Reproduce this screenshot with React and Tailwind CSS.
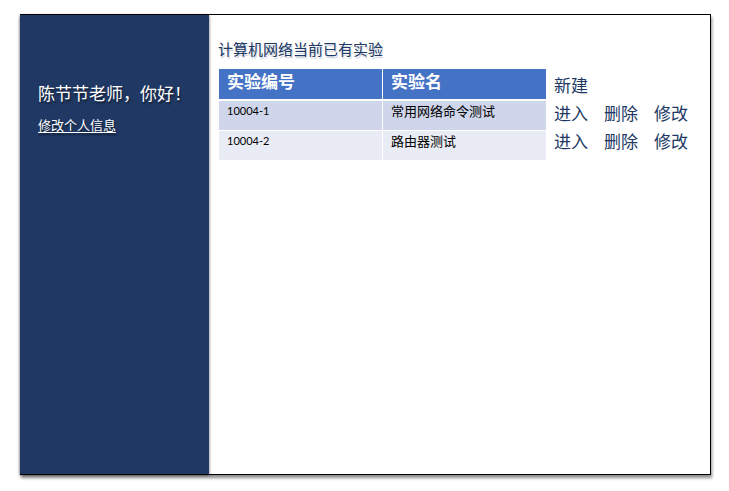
const experiments = [
  { id: '10004-1', name: '常用网络命令测试' },
  { id: '10004-2', name: '路由器测试' },
];

const actions = ['进入', '删除', '修改'];

function Sidebar() {
  return (
    <aside className="z-10 w-[189px] shrink-0 bg-[#203864] pl-[18px] text-white shadow-[0_1px_3px_rgba(0,0,0,0.6)]">
      <p className="mt-[66px] whitespace-nowrap text-[17px] leading-6 [text-shadow:1px_2px_2px_rgba(0,0,0,0.5)]">
        陈节节老师，你好！
      </p>
      <a href="#profile" className="mt-[10px] block text-[13px] leading-5 underline underline-offset-2 [text-shadow:1px_2px_2px_rgba(0,0,0,0.5)]">
        修改个人信息
      </a>
    </aside>
  );
}

function ExperimentTable() {
  return (
    <table className="w-full table-fixed border-collapse text-left text-black">
      <thead>
        <tr className="h-[31px] bg-[#4472c4] text-[17px] leading-6 text-white">
          <th className="w-1/2 border-r border-b-2 border-white px-2 align-top font-bold">实验编号</th>
          <th className="w-1/2 border-b-2 border-white px-2 align-top font-bold">实验名</th>
        </tr>
      </thead>
      <tbody className="text-[13px] leading-5">
        {experiments.map((item) => (
          <tr key={item.id} className="h-[30px] odd:bg-[#cfd5ea] even:bg-[#e9ebf5]">
            <td className="border-r border-b border-white px-2 align-top font-[Lato,'Noto_Sans_CJK_SC',sans-serif] text-[11px] leading-5">{item.id}</td>
            <td className="border-b border-white px-2 align-top">{item.name}</td>
          </tr>
        ))}
      </tbody>
    </table>
  );
}

function Actions() {
  return (
    <div className="flex shrink-0 flex-col gap-1 pt-1 text-[17px] leading-6">
      <button type="button" className="self-start">新建</button>
      {experiments.map((item) => (
        <div key={item.id} className="flex gap-4">
          {actions.map((label) => (
            <button key={label} type="button" aria-label={`${label} ${item.name}`}>{label}</button>
          ))}
        </div>
      ))}
    </div>
  );
}

export default function App() {
  return (
    <div className="flex min-h-screen bg-white pt-[14px] pr-[18px] pb-4 pl-5 font-['Noto_Sans_CJK_SC',sans-serif]">
      <div className="flex flex-1 border border-l-0 border-black bg-white shadow-[1px_3px_3px_rgba(0,0,0,0.45)]">
        <Sidebar />
        <main className="flex-1 pt-6 pr-[22px] pl-[10px] text-[#203864] [text-shadow:1px_2px_1px_rgba(32,56,100,0.22)]">
          <h1 className="-ml-px text-[15px] leading-5">计算机网络当前已有实验</h1>
          <div className="mt-[10px] flex items-start gap-2">
            <div className="flex-1 [text-shadow:none]">
              <ExperimentTable />
            </div>
            <Actions />
          </div>
        </main>
      </div>
    </div>
  );
}
